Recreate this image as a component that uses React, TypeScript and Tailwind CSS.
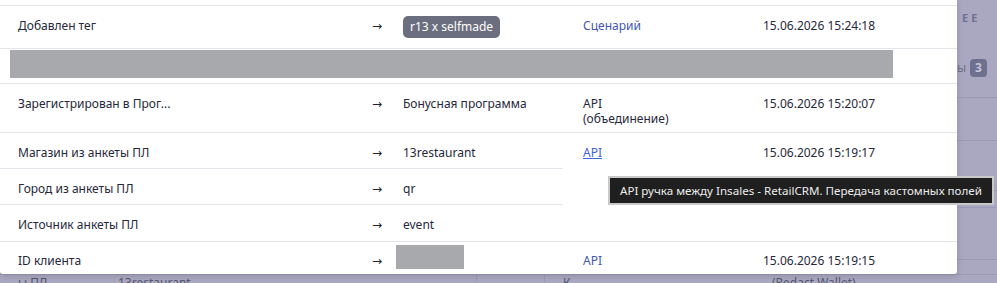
import React from "react";

interface Row {
  label: string;
  value?: React.ReactNode;
}

const font = { fontFamily: '"Noto Sans", "Open Sans", sans-serif' };

const Arrow = () => (
  <span className="text-[12px] text-[#1f2030]" style={{ fontFamily: '"DejaVu Sans", sans-serif' }}>
    →
  </span>
);

const Cells = ({ label, value }: Row) => (
  <>
    <div className="w-[372px] pl-[18px] truncate">{label}</div>
    <div className="w-[31px]">
      <Arrow />
    </div>
    <div className="flex-1">{value}</div>
  </>
);

const App = () => {
  return (
    <div
      className="w-[997px] h-[283px] relative overflow-hidden bg-[#a9a8c0] text-[12px] text-[#26283a]"
      style={font}
    >
      {/* затемнённая страница под модалкой */}
      <div className="flex flex-col h-full">
        <div className="flex h-[274px]">
          <div className="flex-1" />
          <div className="w-[40px] flex flex-col">
            <div className="h-[38px] pt-[10px] pl-[5px] text-[11px] font-bold tracking-[3px] text-[#6f7193]">ЕЕ</div>
            <div className="h-[60px] flex items-center gap-[4px] border-b border-[#9c9bb4] text-[#6f7193]">
              <span>ы</span>
              <span className="px-[5px] rounded-[4px] bg-[#6e7090] text-[#c4c4d4] text-[12px] font-bold leading-[18px]">3</span>
            </div>
            <div className="h-[43px] border-b border-[#9c9bb4]" />
            <div className="h-[50px] border-b border-[#9c9bb4]" />
            <div className="h-[17px] border-b border-[#9c9bb4]" />
            <div className="h-[52px] border-b border-[#9c9bb4]" />
          </div>
        </div>
        <div className="flex h-[9px] border-t border-[#9c9bb4] text-[#55576f] leading-[16px]">
          <div className="w-[118px] pl-[18px] overflow-hidden">ы ПЛ</div>
          <div className="w-[359px] border-r border-[#9c9bb4]">13restaurant</div>
          <div className="w-[68px] border-r border-[#9c9bb4]" />
          <div className="w-[227px] pl-[18px]">К</div>
          <div className="flex-1">(Redact Wallet)</div>
        </div>
      </div>

      {/* модальное окно */}
      <div className="absolute left-0 top-0 w-[957px] h-[274px] bg-white rounded-b-[3px] shadow-[0_2px_6px_rgba(0,0,0,0.15)]">
        <div className="h-[5px]" />
        <div className="border-t border-[#e4e4ea]">
          <div className="flex h-[43px] pt-[12px] leading-[16px] border-b border-[#e4e4ea]">
            <div className="w-[563px] flex">
              <Cells
                label="Добавлен тег"
                value={
                  <span className="relative -top-[2px] inline-block px-[7px] py-[3px] rounded-[5px] bg-[#6b6e7e] text-white text-[12px] leading-[16px]">
                    r13 x selfmade
                  </span>
                }
              />
            </div>
            <div className="w-[180px] ml-[20px] text-[#4257b2]">Сценарий</div>
            <div>15.06.2026 15:24:18</div>
          </div>

          <div className="h-[35px] border-b border-[#e4e4ea] pl-[10px] pt-[1px]">
            <div className="w-[883px] h-[28px] bg-[#a8a9ad]" />
          </div>

          <div className="flex h-[49px] pt-[12px] leading-[15px] border-b border-[#e4e4ea]">
            <div className="w-[563px] flex">
              <Cells label="Зарегистрирован в Прог..." value="Бонусная программа" />
            </div>
            <div className="w-[180px] ml-[20px] flex flex-col">
              <span>API</span>
              <span>(объединение)</span>
            </div>
            <div>15.06.2026 15:20:07</div>
          </div>

          <div className="flex border-b border-[#e4e4ea]">
            <div className="w-[563px] flex flex-col">
              {[
                { label: "Магазин из анкеты ПЛ", value: "13restaurant" },
                { label: "Город из анкеты ПЛ", value: "qr" },
                { label: "Источник анкеты ПЛ", value: "event" },
              ].map((r, i) => (
                <div
                  key={r.label}
                  className={`flex h-[36px] pt-[12px] leading-[16px] ${i < 2 ? "border-b border-[#e4e4ea]" : ""}`}
                >
                  <Cells label={r.label} value={r.value} />
                </div>
              ))}
            </div>
            <div className="w-[180px] ml-[20px] pt-[12px] leading-[16px]">
              <span className="text-[#3f63d8] underline">API</span>
            </div>
            <div className="pt-[12px] leading-[16px]">15.06.2026 15:19:17</div>
          </div>

          <div className="flex h-[34px] leading-[16px]">
            <div className="w-[563px] flex pt-[11px]">
              <div className="w-[372px] pl-[18px]">ID клиента</div>
              <div className="w-[31px]">
                <Arrow />
              </div>
              <div className="flex-1">
                <div className="-mt-[8px] ml-[-7px] w-[68px] h-[24px] bg-[#a8a9ad]" />
              </div>
            </div>
            <div className="w-[180px] ml-[20px] pt-[11px] text-[#4257b2]">API</div>
            <div className="pt-[11px]">15.06.2026 15:19:15</div>
          </div>
        </div>
      </div>

      {/* подсказка */}
      <div className="absolute left-[608px] top-[176px] h-[29px] px-[10px] flex items-center bg-[#1f1f1f] border-2 border-[#c9c9c9] text-[#ececec] text-[11.6px] whitespace-nowrap">
        API ручка между Insales - RetailCRM. Передача кастомных полей
      </div>
    </div>
  );
};

export default App;
